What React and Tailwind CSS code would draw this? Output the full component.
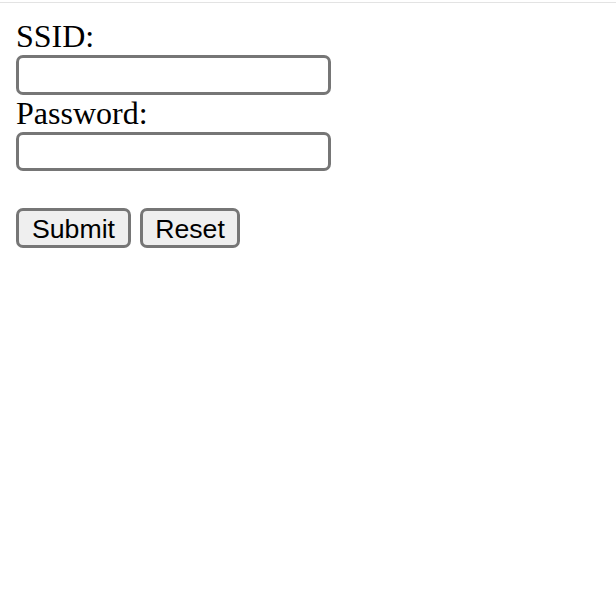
import React from 'react'

export default function App() {
  return (
    <div className="min-h-[616px] bg-white">
      <div className="pt-[2px]">
        <div className="border-t border-[#e3e3e3]" />
      </div>
      <form
        className="px-4 pt-[15px] flex flex-col items-start text-black"
        onSubmit={(e) => e.preventDefault()}
      >
        <label className="h-[37px] leading-[37px] text-[32px] font-['Liberation_Serif',serif]">SSID:</label>
        <input
          type="text"
          className="block w-[315px] h-[40px] border-[3px] border-[#767676] rounded-[7px] bg-white px-1 outline-none"
        />
        <label className="h-[37px] leading-[37px] text-[32px] font-['Liberation_Serif',serif]">Password:</label>
        <input
          type="password"
          className="block w-[315px] h-[39px] border-[3px] border-[#767676] rounded-[7px] bg-white px-1 outline-none"
        />
        <div className="h-[37px]" />
        <div className="flex gap-[9px] font-['Liberation_Sans',Arial,sans-serif]">
          <button
            type="submit"
            className="w-[115px] h-[40px] pt-[2px] flex items-center justify-center border-[3px] border-[#767676] rounded-[7px] bg-[#efefef] text-[26.67px] leading-none text-black"
          >
            Submit
          </button>
          <button
            type="reset"
            className="w-[100px] h-[40px] pt-[2px] flex items-center justify-center border-[3px] border-[#767676] rounded-[7px] bg-[#efefef] text-[26.67px] leading-none text-black"
          >
            Reset
          </button>
        </div>
      </form>
    </div>
  )
}
